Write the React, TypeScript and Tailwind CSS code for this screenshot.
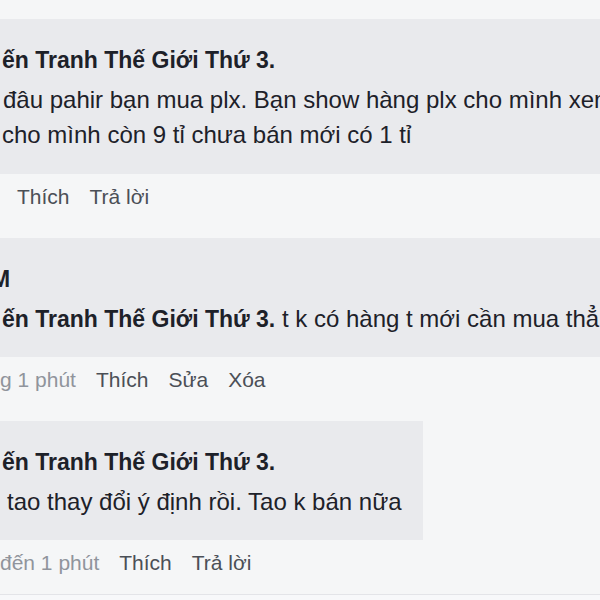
import React from 'react';

type Action = { label: string; muted?: boolean };

const ActionRow: React.FC<{ items: Action[]; offset: string; last?: boolean }> = ({ items, offset, last }) => (
  <div className={`mt-[5px] flex h-[35px] gap-[20px] text-[21px] leading-[35px] whitespace-nowrap ${offset} ${last ? 'mb-[14px]' : 'mb-[24px]'}`}>
    {items.map((item, i) => (
      <span key={i} className={item.muted ? 'text-[#90949c]' : 'text-[#4b4f56]'}>
        {item.label}
      </span>
    ))}
  </div>
);

export default function App() {
  return (
    <div className="h-[600px] w-[600px] overflow-hidden bg-[#f5f6f7] pt-[19px] font-['Liberation_Sans',Arial,sans-serif] text-[#1d2129]">
      {/* comment 1 */}
      <div className="w-full bg-[#e9eaed] pt-[26px] pb-[22px]">
        <div className="pl-[2px] text-[23px] font-bold leading-[30px] mb-[7px] whitespace-nowrap">ến Tranh Thế Giới Thứ 3.</div>
        <div className="text-[24px] leading-[35px] whitespace-nowrap">
          <div className="pl-[3px]">đâu pahir bạn mua plx. Bạn show hàng plx cho mình xem</div>
          <div className="pl-[2px]">cho mình còn 9 tỉ chưa bán mới có 1 tỉ</div>
        </div>
      </div>
      <ActionRow offset="pl-[17px]" items={[{ label: 'Thích' }, { label: 'Trả lời' }]} />

      {/* comment 2 */}
      <div className="w-full bg-[#e9eaed] pt-[26px] pb-[20px]">
        <div className="ml-[-9px] text-[23px] font-bold leading-[30px] mb-[7px] whitespace-nowrap">M</div>
        <div className="pl-[2px] text-[24px] leading-[35px] whitespace-nowrap">
          <span className="text-[23px] font-bold">ến Tranh Thế Giới Thứ 3.</span> t k có hàng t mới cần mua thẳng
        </div>
      </div>
      <ActionRow
        offset="pl-0"
        items={[{ label: 'g 1 phút', muted: true }, { label: 'Thích' }, { label: 'Sửa' }, { label: 'Xóa' }]}
      />

      {/* comment 3 */}
      <div className="w-[423px] bg-[#e9eaed] pt-[26px] pb-[21px]">
        <div className="pl-[2px] text-[23px] font-bold leading-[30px] mb-[7px] whitespace-nowrap">ến Tranh Thế Giới Thứ 3.</div>
        <div className="pl-[7px] text-[24px] leading-[35px] whitespace-nowrap">tao thay đổi ý định rồi. Tao k bán nữa</div>
      </div>
      <ActionRow last offset="pl-0" items={[{ label: 'đến 1 phút', muted: true }, { label: 'Thích' }, { label: 'Trả lời' }]} />

      <div className="h-[20px] border-t border-[#e3e4e8] bg-[#f7f8fa]" />
    </div>
  );
}
